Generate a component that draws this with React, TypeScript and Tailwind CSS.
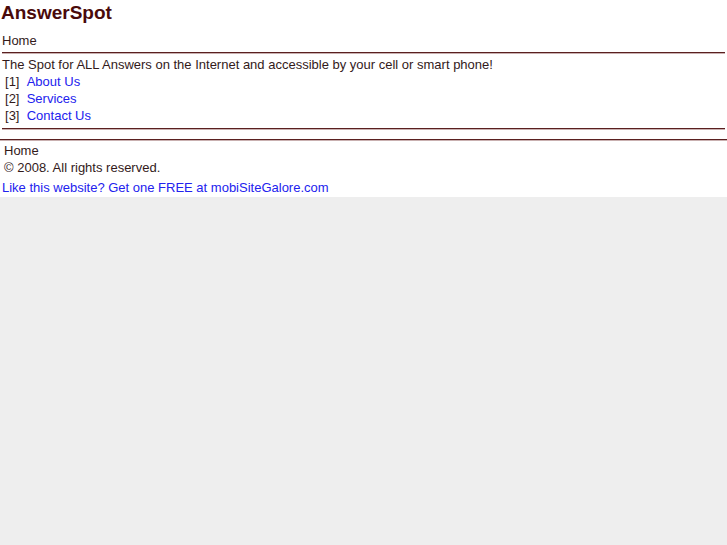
import React from "react";

const links = [
  { n: 1, label: "About Us" },
  { n: 2, label: "Services" },
  { n: 3, label: "Contact Us" },
];

export default function App() {
  return (
    <div className="min-h-[545px] bg-[#eeeeee] font-['Liberation_Sans',Arial,sans-serif] text-[13px] leading-[17px] text-[#331a1a]">
      <div className="bg-white pb-[1px]">
        <h1 className="px-[1px] pt-[2px] text-[19px] font-bold leading-[22px] text-[#4a0a0a]">
          AnswerSpot
        </h1>
        <div className="px-[2px] pt-[8px] pb-[3px]">Home</div>
        <div className="mx-[2px] h-[2px] border-t border-[#5a2020] bg-[#c9b0b0]" />
        <div className="px-[2px] pt-[2px]">
          <p>The Spot for ALL Answers on the Internet and accessible by your cell or smart phone!</p>
          <ul>
            {links.map((l) => (
              <li key={l.n} className="pl-[3px]">
                [{l.n}]&nbsp;&nbsp;<a href="#" className="text-[#2222ee]">{l.label}</a>
              </li>
            ))}
          </ul>
        </div>
        <div className="mx-[2px] mt-[4px] h-[2px] border-t border-[#5a2020] bg-[#c9b0b0]" />
        <div className="mt-[9px] h-[2px] border-t border-[#5a2020] bg-[#c9b0b0]" />
        <div className="px-[4px] pt-[1px]">
          <div>Home</div>
          <div>© 2008. All rights reserved.</div>
        </div>
        <a href="#" className="block px-[2px] pt-[3px] text-[#2222ee]">
          Like this website? Get one FREE at mobiSiteGalore.com
        </a>
      </div>
    </div>
  );
}
